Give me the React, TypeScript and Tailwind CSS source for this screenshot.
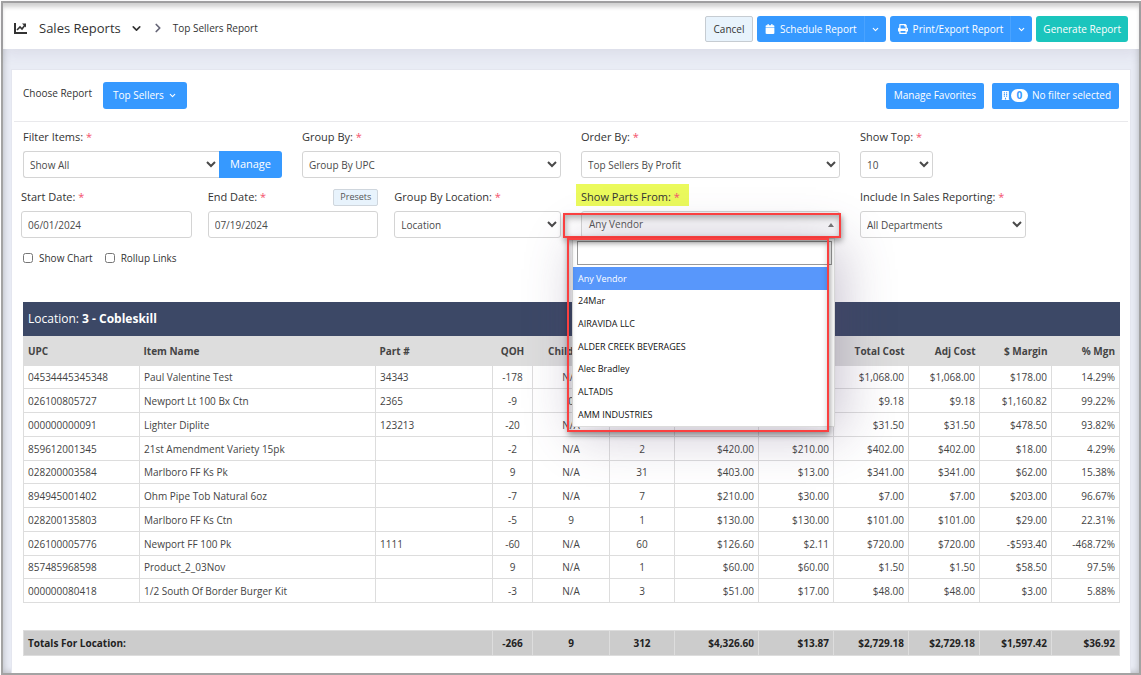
import React from "react";
import { FaCalendar, FaPrint, FaBuilding } from "react-icons/fa";
import { ChevronDown, ChevronRight } from "lucide-react";

const columns = [
  { label: "UPC", width: "w-[116px]", align: "text-left" },
  { label: "Item Name", width: "w-[236px]", align: "text-left" },
  { label: "Part #", width: "w-[117px]", align: "text-left" },
  { label: "QOH", width: "w-[40px]", align: "text-center" },
  { label: "Child Qty", width: "w-[77px]", align: "text-center" },
  { label: "", width: "w-[65px]", align: "text-center" },
  { label: "", width: "w-[84px]", align: "text-right" },
  { label: "", width: "w-[75px]", align: "text-right" },
  { label: "Total Cost", width: "w-[75px]", align: "text-right" },
  { label: "Adj Cost", width: "w-[71px]", align: "text-right" },
  { label: "$ Margin", width: "w-[72px]", align: "text-right" },
  { label: "% Mgn", width: "w-[68px]", align: "text-right" },
];

const rows = [
  ["04534445345348", "Paul Valentine Test", "34343", "-178", "N/A", "", "", "", "$1,068.00", "$1,068.00", "$178.00", "14.29%"],
  ["026100805727", "Newport Lt 100 Bx Ctn", "2365", "-9", "0", "", "", "", "$9.18", "$9.18", "$1,160.82", "99.22%"],
  ["000000000091", "Lighter Diplite", "123213", "-20", "N/A", "", "", "", "$31.50", "$31.50", "$478.50", "93.82%"],
  ["859612001345", "21st Amendment Variety 15pk", "", "-2", "N/A", "2", "$420.00", "$210.00", "$402.00", "$402.00", "$18.00", "4.29%"],
  ["028200003584", "Marlboro FF Ks Pk", "", "9", "N/A", "31", "$403.00", "$13.00", "$341.00", "$341.00", "$62.00", "15.38%"],
  ["894945001402", "Ohm Pipe Tob Natural 6oz", "", "-7", "N/A", "7", "$210.00", "$30.00", "$7.00", "$7.00", "$203.00", "96.67%"],
  ["028200135803", "Marlboro FF Ks Ctn", "", "-5", "9", "1", "$130.00", "$130.00", "$101.00", "$101.00", "$29.00", "22.31%"],
  ["026100005776", "Newport FF 100 Pk", "1111", "-60", "N/A", "60", "$126.60", "$2.11", "$720.00", "$720.00", "-$593.40", "-468.72%"],
  ["857485968598", "Product_2_03Nov", "", "9", "N/A", "1", "$60.00", "$60.00", "$1.50", "$1.50", "$58.50", "97.5%"],
  ["000000080418", "1/2 South Of Border Burger Kit", "", "-3", "N/A", "3", "$51.00", "$17.00", "$48.00", "$48.00", "$3.00", "5.88%"],
];

const totals = ["-266", "9", "312", "$4,326.60", "$13.87", "$2,729.18", "$2,729.18", "$1,597.42", "$36.92"];

const vendors = ["Any Vendor", "24Mar", "AIRAVIDA LLC", "ALDER CREEK BEVERAGES", "Alec Bradley", "ALTADIS", "AMM INDUSTRIES"];

const control = "h-[27px] w-full min-w-0 rounded-[3px] border border-[#d4d4d4] bg-white text-[10px] text-[#4a4a4a]";

function Label({ htmlFor, id, children }: { htmlFor?: string; id?: string; children: React.ReactNode }) {
  return (
    <label htmlFor={htmlFor} id={id} className="block text-[11px] leading-4 whitespace-nowrap text-[#333]">
      {children} <span className="text-[#f4516c]">*</span>
    </label>
  );
}

function SelectField({ id, label, value, className = "" }: { id: string; label: string; value: string; className?: string }) {
  return (
    <div className="flex min-w-0 flex-col gap-[6px]">
      <Label htmlFor={id}>{label}</Label>
      <select id={id} className={`${control} px-[2px] ${className}`}>
        <option>{value}</option>
      </select>
    </div>
  );
}

function VendorPicker() {
  return (
    <div className="flex flex-col">
      <div className="-mt-[5px] mb-[5px] -ml-[5px] flex h-[22px] w-[113px] items-center bg-[#ebfa5c] pt-1 pl-[5px]">
        <Label htmlFor="vendor" id="vendor-label">Show Parts From:</Label>
      </div>
      <div className="relative">
        <button
          type="button"
          id="vendor"
          aria-haspopup="listbox"
          aria-expanded="true"
          className="flex h-[27px] w-full items-center justify-between rounded-[3px] border border-[#d4d4d4] bg-[#fafafb] pr-[5px] pl-[7px] text-[10px] text-[#555]"
        >
          Any Vendor
          <svg width="6" height="4" viewBox="0 0 6 4" aria-hidden="true">
            <path d="M0 4 3 0l3 4z" fill="#777" />
          </svg>
        </button>
        <div className="absolute top-[27px] right-[5px] -left-[9px] z-10 border border-[#ddd] bg-white pt-[2px] shadow-[6px_6px_50px_rgba(82,63,105,0.32)]">
          <input aria-label="Search vendors" className="mr-[2px] ml-1 block h-6 w-[calc(100%-6px)] border border-[#999] bg-white px-1 text-[10px]" />
          <ul role="listbox" aria-labelledby="vendor-label" className="mt-[2px] mr-[7px] flex h-[159px] flex-col text-[9px] text-[#111]">
            {vendors.map((vendor, index) => (
              <li
                key={vendor}
                role="option"
                aria-selected={index === 0}
                className={`flex flex-1 items-center px-[5px] ${index === 0 ? "bg-[#5897fb] font-medium text-white" : ""}`}
              >
                {vendor}
              </li>
            ))}
          </ul>
        </div>
        <div className="pointer-events-none absolute top-[2px] -right-px -left-[18px] z-20 h-[25px] border-2 border-[#fa4040] shadow-[1px_3px_6px_rgba(0,0,0,0.4),inset_1px_3px_6px_rgba(0,0,0,0.3)]" />
        <div className="pointer-events-none absolute top-[27px] right-[11px] -left-[14px] z-20 h-[194px] border-2 border-[#fa4040] shadow-[1px_3px_6px_rgba(0,0,0,0.4),inset_1px_3px_6px_rgba(0,0,0,0.25)]" />
      </div>
    </div>
  );
}

function SplitButton({ icon, label }: { icon: React.ReactNode; label: string }) {
  return (
    <div className="flex h-[26px] rounded-[3px] bg-[#3699ff] text-[10px] text-white">
      <button type="button" className="flex items-center gap-[5px] pr-[7px] pl-2 whitespace-nowrap">
        {icon}
        {label}
      </button>
      <button type="button" aria-label={`${label} options`} className="flex w-[22px] items-center justify-center border-l border-[#4aa3ff]">
        <ChevronDown size={9} strokeWidth={3} />
      </button>
    </div>
  );
}

export default function App() {
  return (
    <div className="flex min-h-screen flex-col bg-white pt-px pl-px font-['Open_Sans',sans-serif] text-[#333]">
      <div className="flex grow flex-col border-2 border-[#a3a3a3] bg-[#e9ecf5] shadow-[inset_0_0_7px_rgba(0,0,0,0.25)]">
        <header className="flex h-[46px] items-center justify-between bg-white pr-[11px] pl-[11px] shadow-[inset_0_5px_4px_-1px_#d0d0d0,0_2px_16px_rgba(82,63,105,0.12)]">
          <div className="flex items-center pt-1">
            <svg width="13" height="11" viewBox="0 0 13 11" fill="none" stroke="#333" strokeWidth="2" aria-hidden="true">
              <path d="M1 0v10h12" />
              <path d="M3 7l3-3 2 2 3-4" strokeWidth="1.6" />
              <path d="M8 0.5h4v4z" fill="#333" stroke="none" />
            </svg>
            <h1 className="ml-3 text-[13px] leading-5">Sales Reports</h1>
            <ChevronDown className="ml-[9px]" size={13} strokeWidth={3} />
            <ChevronRight className="ml-2 text-[#667]" size={14} strokeWidth={3} />
            <span className="ml-2 text-[10px]">Top Sellers Report</span>
          </div>
          <div className="flex items-center gap-1 pt-[6px]">
            <button type="button" className="h-[26px] w-12 rounded-[2px] border border-[#c6ccd2] bg-[#e8f3fc] text-[10px]">Cancel</button>
            <SplitButton icon={<FaCalendar size={10} />} label="Schedule Report" />
            <SplitButton icon={<FaPrint size={10} />} label="Print/Export Report" />
            <button type="button" className="h-[26px] rounded-[3px] bg-[#1bc5bd] px-[7px] text-[10px] whitespace-nowrap text-white">Generate Report</button>
          </div>
        </header>

        <main className="mx-2 mt-5 flex grow flex-col border border-b-0 border-[#e4e6ef] bg-white">
          <div className="mx-[2px] flex h-[52px] items-center justify-between border-b border-[#e9e9ec] pr-[9px] pl-[9px]">
            <div className="flex items-center gap-[11px]">
              <span className="pb-1 text-[10px]">Choose Report</span>
              <button type="button" className="flex h-[27px] items-center gap-1 rounded-[3px] bg-[#3699ff] px-[10px] text-[10px] text-white">
                Top Sellers <ChevronDown size={9} strokeWidth={3} />
              </button>
            </div>
            <div className="flex gap-2">
              <button type="button" className="h-[26px] rounded-[2px] bg-[#3699ff] px-2 text-[10px] text-white">Manage Favorites</button>
              <button type="button" className="flex h-[26px] items-center rounded-[2px] bg-[#3699ff] pr-2 pl-[9px] text-[10px] text-white">
                <FaBuilding size={9} />
                <span className="mr-1 ml-px flex h-[13px] w-[17px] items-center justify-center rounded-full bg-white font-bold text-[#3699ff]">0</span>
                No filter selected
              </button>
            </div>
          </div>

          <form className="px-[11px] pt-[7px]">
            <div className="grid grid-cols-4 gap-x-5 gap-y-[11px]">
              <div className="flex flex-col gap-[6px]">
                <Label htmlFor="filter-items">Filter Items:</Label>
                <div className="flex">
                  <select id="filter-items" className={`${control} flex-1 rounded-r-none border-r-0 px-[2px]`}>
                    <option>Show All</option>
                  </select>
                  <button type="button" className="h-[27px] w-[63px] rounded-r-[3px] bg-[#3699ff] text-[11px] text-white">Manage</button>
                </div>
              </div>
              <SelectField id="group-by" label="Group By:" value="Group By UPC" />
              <SelectField id="order-by" label="Order By:" value="Top Sellers By Profit" />
              <SelectField id="show-top" label="Show Top:" value="10" className="max-w-[73px]" />

              <div className="col-span-2 -ml-[2px] grid grid-cols-[170fr_170fr_166fr] gap-x-4">
                <div className="flex flex-col gap-[6px]">
                  <Label htmlFor="start-date">Start Date:</Label>
                  <input id="start-date" defaultValue="06/01/2024" className={`${control} px-[6px]`} />
                </div>
                <div className="flex flex-col gap-[6px]">
                  <div className="flex h-4 items-center justify-between">
                    <Label htmlFor="end-date">End Date:</Label>
                    <button type="button" className="h-[17px] rounded-[2px] border border-[#cfd6dd] bg-[#e8f3fc] px-[6px] text-[9px] text-[#555]">Presets</button>
                  </div>
                  <input id="end-date" defaultValue="07/19/2024" className={`${control} px-[6px]`} />
                </div>
                <SelectField id="group-location" label="Group By Location:" value="Location" />
              </div>
              <VendorPicker />
              <SelectField id="departments" label="Include In Sales Reporting:" value="All Departments" className="max-w-[166px]" />
            </div>
            <div className="mt-3 flex h-4 items-center gap-3 text-[10px]">
              <label className="flex items-center gap-[6px]">
                <input type="checkbox" className="size-[10px]" />
                Show Chart
              </label>
              <label className="flex items-center gap-[6px]">
                <input type="checkbox" className="size-[10px]" />
                Rollup Links
              </label>
            </div>
          </form>

          <div className="mr-3 ml-[11px] mt-9">
            <table className="w-full table-fixed border-collapse text-[10px] leading-4 text-[#444]">
              <colgroup>
                {columns.map((column, index) => (
                  <col key={index} className={column.width} />
                ))}
              </colgroup>
              <thead>
                <tr className="h-[33px] border border-[#3c4866] bg-[#3c4866] text-[12px] text-white">
                  <th colSpan={12} className="px-1 text-left font-normal">
                    Location: <span className="font-bold">3 - Cobleskill</span>
                  </th>
                </tr>
                <tr className="h-[30px] border border-[#ddd] bg-[#ddd]">
                  {columns.map((column, index) => (
                    <th key={index} className={`px-1 font-bold whitespace-nowrap ${column.align}`}>
                      {column.label}
                    </th>
                  ))}
                </tr>
              </thead>
              <tbody>
                {rows.map((row) => (
                  <tr key={row[0]} className="h-6 nth-[4n+1]:h-[23px]">
                    {row.map((cell, index) => (
                      <td key={index} className={`border border-[#ddd] px-1 whitespace-nowrap ${columns[index].align}`}>
                        {cell}
                      </td>
                    ))}
                  </tr>
                ))}
              </tbody>
              <tfoot>
                <tr className="h-7">
                  <td colSpan={12} />
                </tr>
                <tr className="h-[25px] bg-[#ccc] font-bold text-[#222]">
                  <td colSpan={3} className="border border-[#ddd] px-1">Totals For Location:</td>
                  {totals.map((total, index) => (
                    <td key={index} className={`border border-[#ddd] px-1 ${columns[index + 3].align}`}>
                      {total}
                    </td>
                  ))}
                </tr>
              </tfoot>
            </table>
          </div>
        </main>
      </div>
    </div>
  );
}
